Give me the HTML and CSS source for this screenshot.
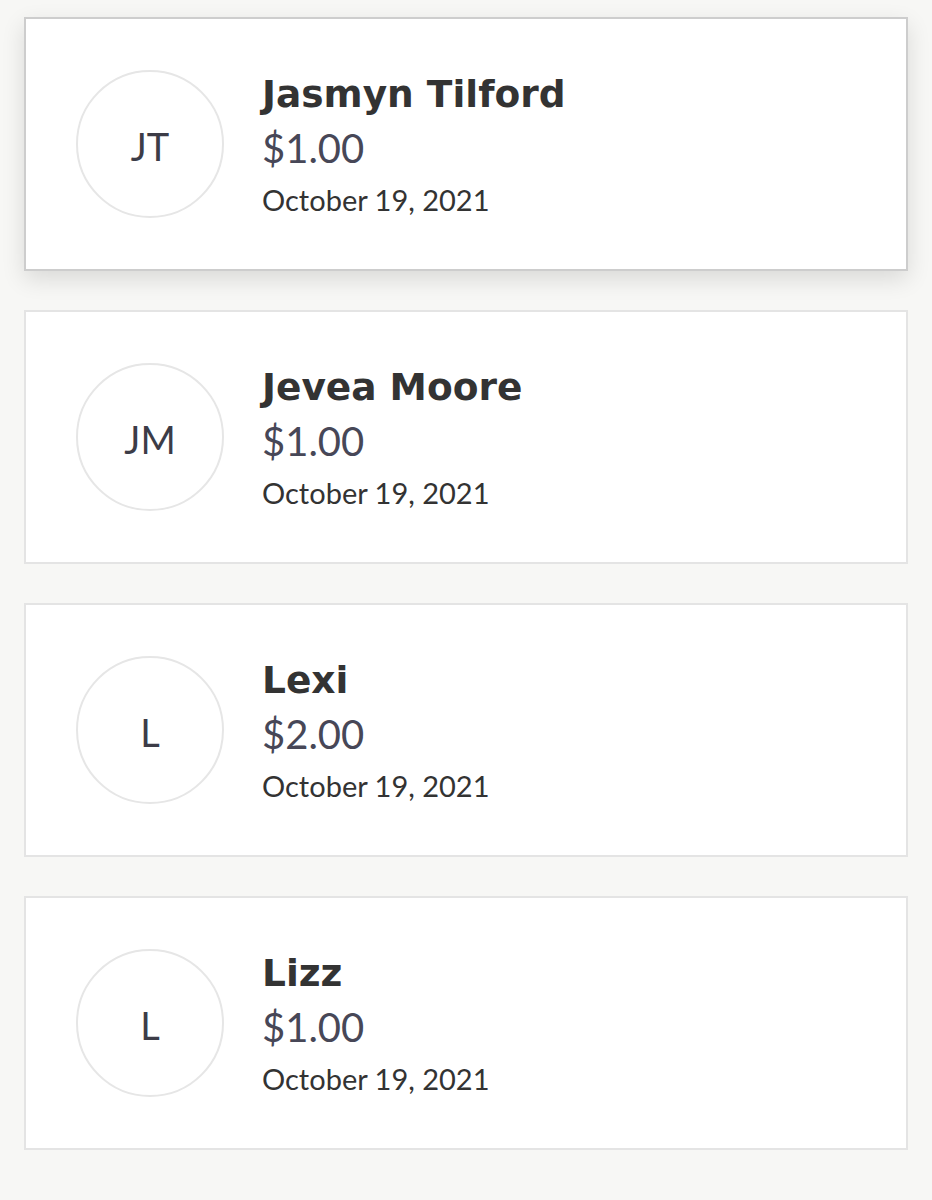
FILE: index.html
```html
<!DOCTYPE html>
<html lang="en">
<head>
    <meta charset="UTF-8">
    <meta name="viewport" content="width=device-width, initial-scale=1.0">
    <title>Supporters</title>
    <link rel="stylesheet" href="styles.css">
</head>
<body>

    <div class="supporters">
        <!-- Latest supporter is highlighted -->
        <div class="supporter-card active">
            <div class="avatar">JT</div>
            <div class="details">
                <div class="name">Jasmyn Tilford</div>
                <div class="amount">$1.00</div>
                <div class="date">October 19, 2021</div>
            </div>
        </div>

        <div class="supporter-card">
            <div class="avatar">JM</div>
            <div class="details">
                <div class="name">Jevea Moore</div>
                <div class="amount">$1.00</div>
                <div class="date">October 19, 2021</div>
            </div>
        </div>

        <div class="supporter-card">
            <div class="avatar">L</div>
            <div class="details">
                <div class="name">Lexi</div>
                <div class="amount">$2.00</div>
                <div class="date">October 19, 2021</div>
            </div>
        </div>

        <div class="supporter-card">
            <div class="avatar">L</div>
            <div class="details">
                <div class="name">Lizz</div>
                <div class="amount">$1.00</div>
                <div class="date">October 19, 2021</div>
            </div>
        </div>
    </div>

</body>
</html>
```

FILE: styles.css
```css
/* --- Basic Setup --- */
:root {
    --page-bg: #f7f7f5;
    --card-bg: #ffffff;
    --card-border: #e4e4e4;
    --active-border: #cdcdcd;
    --text-color: #333333;
    --muted-text: #474757;
}

body {
    margin: 0;
    background-color: var(--page-bg);
    color: var(--text-color);
    font-family: Lato, "Open Sans", sans-serif;
}

/* --- List Layout --- */
.supporters {
    display: flex;
    flex-direction: column;
    gap: 39px;
    padding: 17px 24px 40px;
}

.supporter-card {
    display: flex;
    align-items: center;
    gap: 38px;
    height: 254px;
    box-sizing: border-box;
    padding: 0 50px;
    background-color: var(--card-bg);
    border: 2px solid var(--card-border);
}

.supporter-card.active {
    border-color: var(--active-border);
    box-shadow: 0 8px 22px rgba(0, 0, 0, 0.12);
}

/* --- Avatar Circle --- */
.avatar {
    flex: none;
    display: flex;
    align-items: center;
    justify-content: center;
    width: 148px;
    height: 148px;
    box-sizing: border-box;
    padding-top: 4px;
    border: 2px solid #e6e6e6;
    border-radius: 50%;
    font-size: 38px;
    color: #3c3c47;
}

/* --- Text --- */
.details {
    display: flex;
    flex-direction: column;
    margin-top: 4px;
}

.name {
    font-family: "DejaVu Sans", sans-serif;
    font-weight: 700;
    font-size: 37.5px;
    line-height: 48px;
    color: var(--text-color);
}

.amount {
    font-size: 40px;
    line-height: 60px;
    color: var(--muted-text);
}

.date {
    font-size: 29px;
    line-height: 44px;
    color: var(--text-color);
}
```
